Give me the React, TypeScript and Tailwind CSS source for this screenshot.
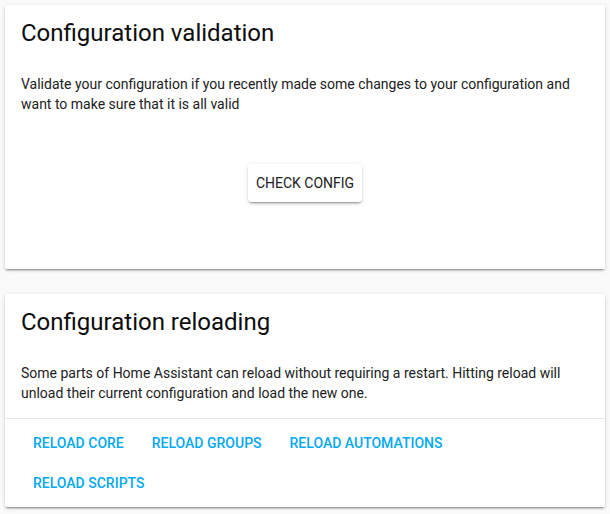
import React from 'react';

const card =
  'bg-white rounded-[2px] shadow-[0_2px_2px_0_rgba(0,0,0,0.14),0_1px_5px_0_rgba(0,0,0,0.12),0_3px_1px_-2px_rgba(0,0,0,0.2)]';

const reloadActions = ['Reload Core', 'Reload Groups', 'Reload Automations', 'Reload Scripts'];

export default function App() {
  return (
    <div className="min-h-screen w-[610px] bg-[#fafafa] p-[5px] font-['Roboto',sans-serif] text-[#212121]">
      {/* Validation card */}
      <div className={`${card} h-[264px]`}>
        <div className="px-4 pt-[12px] text-[24px] leading-8 text-[#0d0d0d]">Configuration validation</div>
        <div className="mt-[25px] px-4 text-[14px] leading-5">
          Validate your configuration if you recently made some changes to your configuration and want to make sure
          that it is all valid
        </div>
        <div className="mt-[50px] flex justify-center">
          <button className="h-[38px] rounded-[4px] bg-white px-2 text-[14px] uppercase text-[#212121] shadow-[0_2px_2px_0_rgba(0,0,0,0.14),0_1px_5px_0_rgba(0,0,0,0.12),0_3px_1px_-2px_rgba(0,0,0,0.2)]">
            Check config
          </button>
        </div>
      </div>

      {/* Reloading card */}
      <div className={`${card} mt-[25px] h-[213px]`}>
        <div className="px-4 pt-[12px] text-[24px] leading-8 text-[#0d0d0d]">Configuration reloading</div>
        <div className="mt-[25px] px-4 pb-[15px] text-[14px] leading-5">
          Some parts of Home Assistant can reload without requiring a restart. Hitting reload will unload their
          current configuration and load the new one.
        </div>
        <div className="border-t border-[#e8e8e8] px-[14px] pt-[4px]">
          <div className="flex max-w-[520px] flex-wrap">
            {reloadActions.map((label) => (
              <button
                key={label}
                className="mx-[6px] h-10 px-2 text-[14px] font-medium uppercase text-[#03a9f4]"
              >
                {label}
              </button>
            ))}
          </div>
        </div>
      </div>
    </div>
  );
}
